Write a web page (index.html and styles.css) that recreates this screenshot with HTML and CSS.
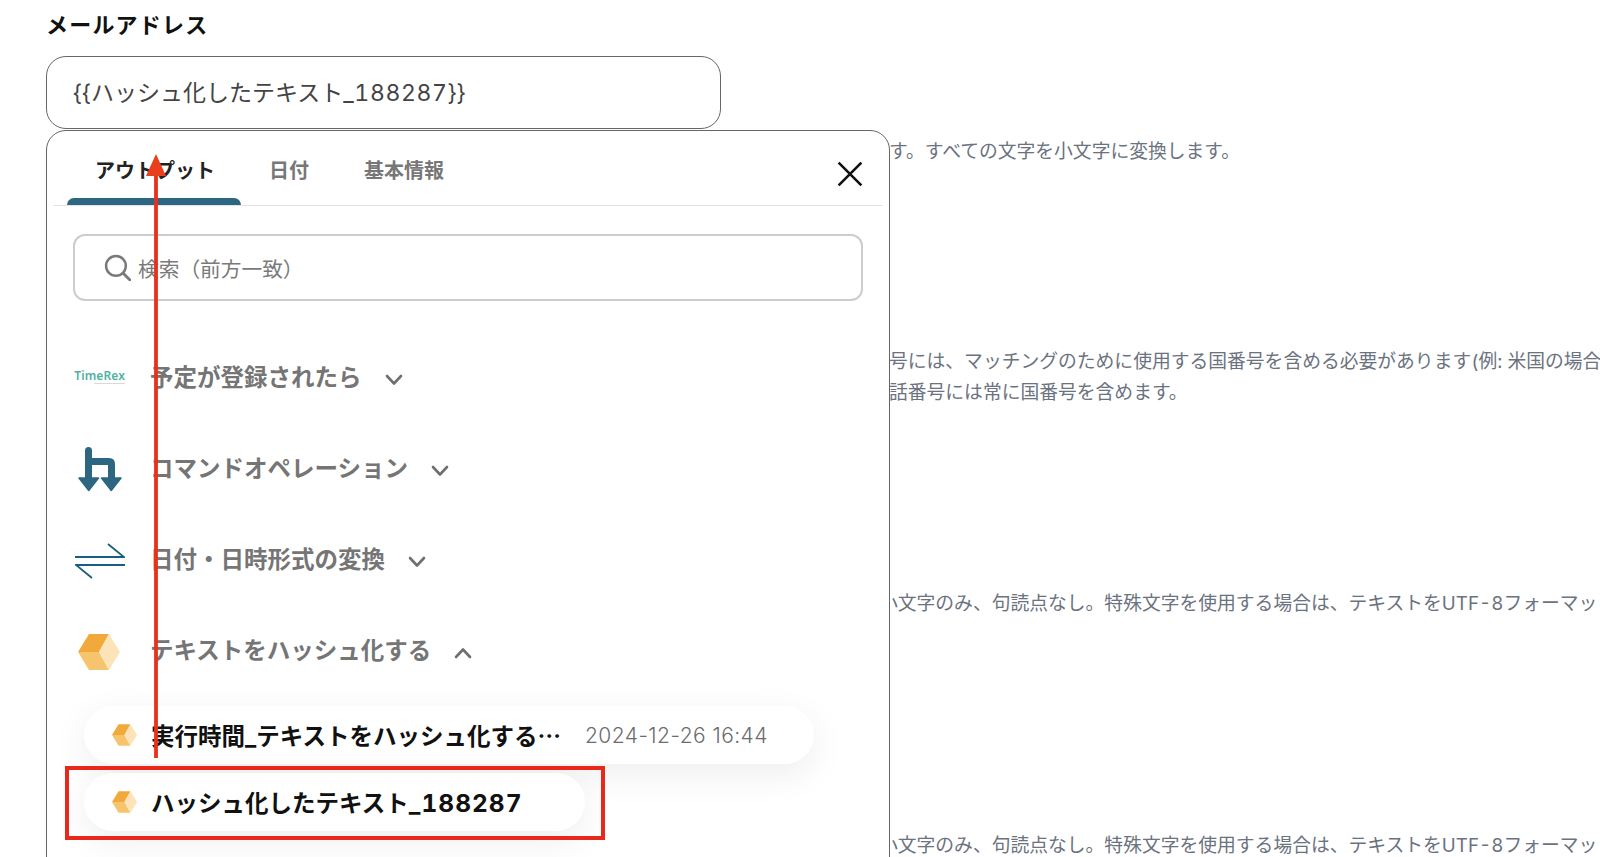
FILE: index.html
```html
<!DOCTYPE html>
<html lang="ja">
<head>
<meta charset="utf-8">
<title>メールアドレス</title>
<link rel="stylesheet" href="styles.css">
</head>
<body>
<svg width="0" height="0" class="defs">
  <defs>
    <symbol id="cube" viewBox="0 0 42 36">
      <path d="M11 0H31L21 18H0Z" fill="#f2a93b"/>
      <path d="M0 18H21L31 36H11Z" fill="#f6c46c"/>
      <path d="M31 0L42 18L31 36L21 18Z" fill="#fce3b8"/>
    </symbol>
    <symbol id="chev-down" viewBox="0 0 18 12">
      <path d="M2 2L9 9.5L16 2" fill="none" stroke="#6f6f6f" stroke-width="2.6" stroke-linecap="round" stroke-linejoin="round"/>
    </symbol>
    <symbol id="chev-up" viewBox="0 0 18 12">
      <path d="M2 10L9 2.5L16 10" fill="none" stroke="#6f6f6f" stroke-width="2.6" stroke-linecap="round" stroke-linejoin="round"/>
    </symbol>
  </defs>
</svg>

<main class="form">
  <label class="field-label">メールアドレス</label>
  <div class="field-input"><span class="field-value">{{ハッシュ化したテキスト<span class="digits">_188287</span>}}</span></div>
  <p class="hint hint-1">す。すべての文字を小文字に変換します。</p>
  <p class="hint hint-2">号には、マッチングのために使用する国番号を含める必要があります(例: 米国の場合<br>話番号には常に国番号を含めます。</p>
  <p class="hint hint-3">小文字のみ、句読点なし。特殊文字を使用する場合は、テキストをUTF-8フォーマッ</p>
  <p class="hint hint-4">小文字のみ、句読点なし。特殊文字を使用する場合は、テキストをUTF-8フォーマッ</p>
</main>

<section class="panel">
  <header class="tabs">
    <div class="tab tab-active">アウトプット</div>
    <div class="tab">日付</div>
    <div class="tab tab-info">基本情報</div>
    <svg class="close" viewBox="0 0 24 24"><path d="M1.500 1.500L22.500 22.500M22.500 1.500L1.500 22.500" stroke="#111" stroke-width="2.400" fill="none"/></svg>
  </header>

  <div class="search">
    <svg class="search-icon" viewBox="0 0 26 26"><circle cx="11.500" cy="11.500" r="9.500" fill="none" stroke="#7a7a7a" stroke-width="2.400"/><path d="M18.500 18.500L25 25" stroke="#7a7a7a" stroke-width="2.800" stroke-linecap="round"/></svg>
    <span class="placeholder">検索（前方一致）</span>
  </div>

  <div class="groups">
    <div class="group">
      <div class="group-icon">
        <div class="timerex"><span class="timerex-name">TimeRex</span><span class="timerex-sub"></span></div>
      </div>
      <span class="group-title">予定が登録されたら</span>
      <svg class="chev"><use href="#chev-down"/></svg>
    </div>
    <div class="group">
      <div class="group-icon">
        <svg class="icon-cmd" viewBox="0 0 44 45"><path d="M10.500 3.500V32M10.500 14.500H31Q33.500 14.500 33.500 17V32" fill="none" stroke="#2d6681" stroke-width="7" stroke-linecap="round" stroke-linejoin="round"/><path d="M1 31H20.500L10.750 43.500ZM23.500 31H43L33.250 43.500Z" fill="#2d6681" stroke="#2d6681" stroke-width="1.500" stroke-linejoin="round"/></svg>
      </div>
      <span class="group-title">コマンドオペレーション</span>
      <svg class="chev"><use href="#chev-down"/></svg>
    </div>
    <div class="group">
      <div class="group-icon">
        <svg class="icon-swap" viewBox="0 0 50 36"><path d="M33 1L49 14H0M17 35L1 22H50" fill="none" stroke="#175f7c" stroke-width="1.800"/></svg>
      </div>
      <span class="group-title">日付・日時形式の変換</span>
      <svg class="chev"><use href="#chev-down"/></svg>
    </div>
    <div class="group">
      <div class="group-icon">
        <svg class="icon-cube"><use href="#cube"/></svg>
      </div>
      <span class="group-title">テキストをハッシュ化する</span>
      <svg class="chev"><use href="#chev-up"/></svg>
    </div>
  </div>

  <div class="pills">
    <div class="pill pill-wide">
      <svg class="pill-cube"><use href="#cube"/></svg>
      <span class="pill-name">実行時間_テキストをハッシュ化する<span class="jp">…</span></span>
      <span class="pill-date">2024-12-26 16:44</span>
    </div>
    <div class="pill pill-short">
      <svg class="pill-cube"><use href="#cube"/></svg>
      <span class="pill-name">ハッシュ化したテキスト<span class="pill-digits">_188287</span></span>
    </div>
  </div>
</section>

<svg class="arrow" viewBox="0 0 22 606"><path d="M11 20V604" stroke="#e8301c" stroke-width="3.800"/><path d="M11 0L21 22H1Z" fill="#e8401f"/></svg>
<div class="callout"></div>
</body>
</html>
```

FILE: styles.css
```css
* { box-sizing: border-box; }
html, body {
  margin: 0;
  height: 857px;
  overflow: hidden;
  background: #fff;
}
body {
  position: relative;
  font-family: Inter, "Noto Sans CJK JP", sans-serif;
  font-variant-numeric: tabular-nums;
  color: #111;
}
.defs { position: absolute; }
.jp { font-family: "Noto Sans CJK JP", sans-serif; }
.form {
  display: flex;
  flex-direction: column;
  padding: 9px 0 0 46px;
}
.field-label {
  font-size: 22px;
  line-height: 32px;
  font-weight: 700;
  letter-spacing: 1.200px;
  margin-bottom: 15px;
}
.field-input {
  width: 675px;
  height: 73px;
  border: 1px solid #666;
  border-radius: 20px;
  padding: 0 0 4px 26px;
  display: flex;
  align-items: center;
  font-size: 23px;
  color: #444;
  background: #fff;
}
.field-value { white-space: nowrap; }
.digits { letter-spacing: .6px; }
.hint {
  margin: 0 0 0 843px;
  font-size: 18.800px;
  line-height: 31px;
  color: #6b7280;
  white-space: nowrap;
}
.hint-1 { margin-top: 7px; }
.hint-2 { margin-top: 179px; }
.hint-3 { margin-top: 180px; margin-left: 833px; }
.hint-4 { margin-top: 211px; margin-left: 833px; }

.panel {
  position: absolute;
  left: 46px;
  top: 130px;
  width: 844px;
  height: 760px;
  background: #fff;
  border: 1px solid #666;
  border-radius: 20px;
  padding: 0 6px;
}
.tabs {
  display: flex;
  align-items: flex-start;
  height: 75px;
  border-bottom: 1px solid #e2e2e2;
  padding-left: 14px;
  position: relative;
}
.tab {
  height: 74px;
  padding: 23px 28px 0;
  font-size: 20px;
  line-height: 34px;
  font-weight: 700;
  color: #777;
  position: relative;
}
.tab-info { padding-left: 27px; }
.tab-active {
  width: 174px;
  color: #222;
  white-space: nowrap;
}
.tab-active::after {
  content: "";
  position: absolute;
  left: 0;
  right: 0;
  bottom: 0;
  height: 7px;
  background: #2d6681;
  border-radius: 7px 7px 0 0;
}
.close {
  position: absolute;
  left: 784px;
  top: 30px;
  width: 26px;
  height: 26px;
}
.search {
  margin: 28px 20px 0;
  height: 67px;
  border: 2px solid #cccccc;
  border-radius: 12px;
  display: flex;
  align-items: center;
  padding-left: 29px;
  gap: 7px;
}
.search-icon { width: 27px; height: 27px; }
.placeholder {
  font-size: 20.700px;
  color: #7a7a7a;
}
.groups {
  display: flex;
  flex-direction: column;
  margin-top: 33px;
}
.group {
  height: 91px;
  display: flex;
  align-items: center;
}
.group-icon {
  width: 97px;
  padding-left: 22px;
  flex: none;
  display: flex;
  align-items: center;
}
.group-title {
  font-size: 23.500px;
  line-height: 34px;
  padding-bottom: 3px;
  font-weight: 700;
  color: #757575;
}
.chev {
  width: 18px;
  height: 12px;
  margin-left: 23px;
}
.timerex {
  width: 50px;
  display: flex;
  flex-direction: column;
  align-items: flex-end;
  padding-bottom: 6px;
}
.timerex-name {
  font-family: "Noto Sans", sans-serif;
  font-size: 12px;
  line-height: 12px;
  font-weight: 600;
  letter-spacing: .1px;
  color: #4eb3a2;
}
.timerex-sub {
  width: 31px;
  height: 1px;
  margin-top: 1px;
  background: #d5dbd9;
}
.icon-cmd { width: 44px; height: 45px; margin: 0 0 3px 3px; }
.icon-swap { width: 50px; height: 36px; margin-bottom: 2px; }
.icon-cube { width: 42px; height: 36px; margin: 0 0 2px 3px; }

.pills {
  display: flex;
  flex-direction: column;
  gap: 9px;
  margin: 8px 0 0 31px;
}
.pill {
  height: 58px;
  background: #fff;
  border-radius: 29px;
  display: flex;
  align-items: center;
  box-shadow: 0 10px 36px rgba(0, 0, 0, .07);
  padding-left: 28px;
  flex: none;
}
.pill-wide { width: 730px; }
.pill-short { width: 501px; }
.pill-cube { width: 25px; height: 22px; margin-right: 14px; flex: none; }
.pill-name {
  font-size: 23.500px;
  font-weight: 700;
  color: #111;
  white-space: nowrap;
}
.pill-digits { font-size: 24.500px; letter-spacing: 1px; }
.pill-date {
  margin-left: 24px;
  font-size: 21px;
  font-weight: 300;
  font-variant-numeric: normal;
  letter-spacing: .45px;
  color: #6c6c6c;
  white-space: nowrap;
}
.arrow {
  position: absolute;
  left: 145px;
  top: 154px;
  width: 22px;
  height: 606px;
}
.callout {
  position: absolute;
  left: 65px;
  top: 766px;
  width: 540px;
  height: 74px;
  border: 4px solid #e8281a;
}
```
